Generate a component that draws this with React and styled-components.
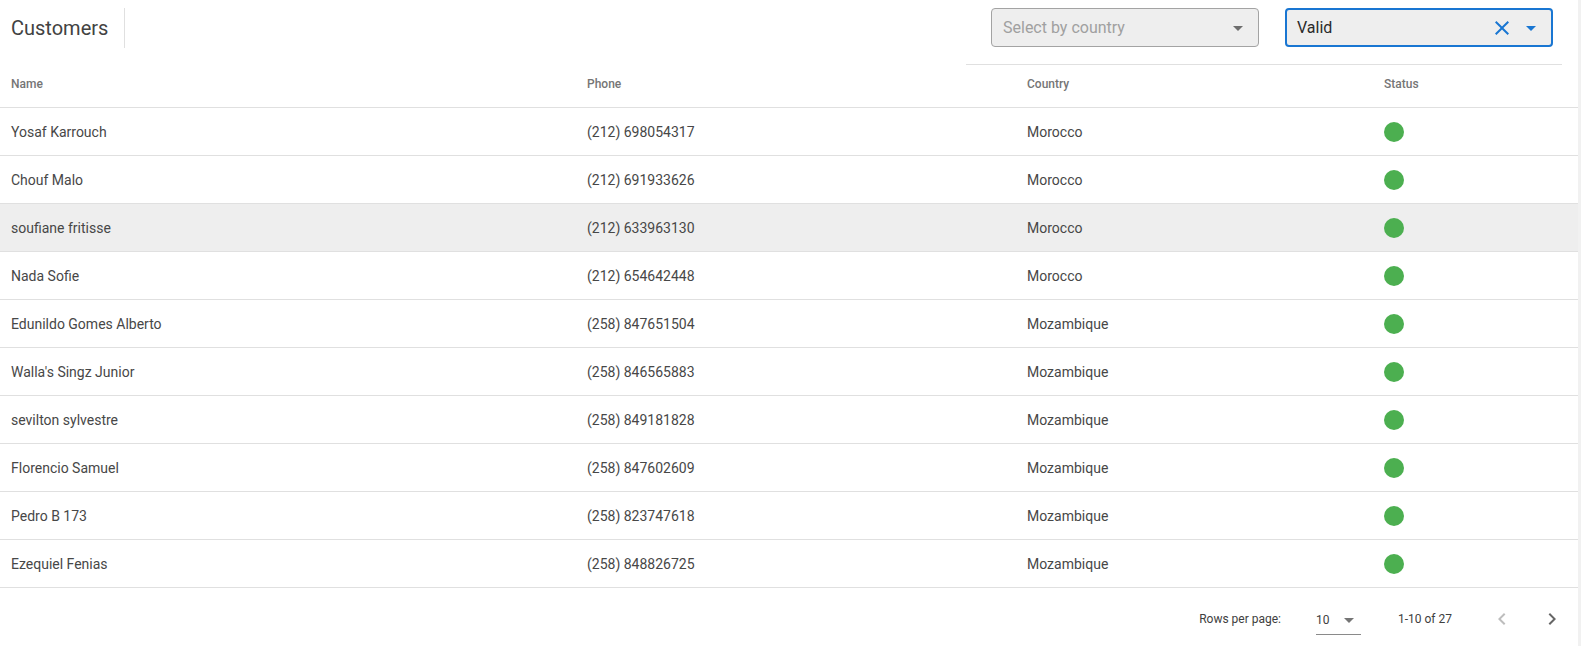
import React from "react";
import styled, { createGlobalStyle } from "styled-components";

const GlobalStyle = createGlobalStyle`
  html, body {
    margin: 0;
    padding: 0;
    background: #f1f1f1;
  }
  body {
    font-family: Roboto, "Liberation Sans", sans-serif;
  }
`;

const customers = [
  { name: "Yosaf Karrouch", phone: "(212) 698054317", country: "Morocco" },
  { name: "Chouf Malo", phone: "(212) 691933626", country: "Morocco" },
  { name: "soufiane fritisse", phone: "(212) 633963130", country: "Morocco", hover: true },
  { name: "Nada Sofie", phone: "(212) 654642448", country: "Morocco" },
  { name: "Edunildo Gomes Alberto", phone: "(258) 847651504", country: "Mozambique" },
  { name: "Walla's Singz Junior", phone: "(258) 846565883", country: "Mozambique" },
  { name: "sevilton sylvestre", phone: "(258) 849181828", country: "Mozambique" },
  { name: "Florencio Samuel", phone: "(258) 847602609", country: "Mozambique" },
  { name: "Pedro B 173", phone: "(258) 823747618", country: "Mozambique" },
  { name: "Ezequiel Fenias", phone: "(258) 848826725", country: "Mozambique" }
];

const Page = styled.div`
  width: 1578px;
  height: 646px;
  background: #fff;
  color: rgba(0, 0, 0, 0.87);
`;

const Toolbar = styled.div`
  display: flex;
  align-items: flex-start;
  height: 65px;
`;

const Title = styled.h6`
  margin: 8px 0 0 0;
  height: 40px;
  padding: 0 16px 0 11px;
  display: flex;
  align-items: center;
  border-right: 1px solid #e0e0e0;
  font-size: 20px;
  font-weight: 400;
  color: #424242;
`;

const Filters = styled.div`
  margin-left: auto;
  margin-right: 16px;
  display: flex;
  gap: 26px;
  padding: 8px 9px 17px 25px;
  border-bottom: 1px solid #e0e0e0;
`;

const SelectBox = styled.div`
  box-sizing: border-box;
  width: ${(p) => p.width}px;
  height: 39px;
  display: flex;
  align-items: center;
  padding: 0 8px 0 11px;
  background: #eeeeee;
  border: ${(p) => (p.focused ? "2px solid #1976d2" : "1px solid #a3a3a3")};
  border-radius: 4px;
  font-size: 16px;
  color: ${(p) => (p.placeholder ? "#a0a0a0" : "#2a2a2a")};
`;

const SelectValue = styled.span`
  flex: 1;
  margin-left: ${(p) => (p.focused ? -1 : 0)}px;
`;

const Icon = styled.svg`
  width: 24px;
  height: 24px;
  flex-shrink: 0;
  fill: ${(p) => p.color || "rgba(0,0,0,0.54)"};
  margin-left: ${(p) => p.gap || 0}px;
`;

const Row = styled.div`
  display: grid;
  grid-template-columns: 576px 440px 357px 1fr;
  align-items: center;
  height: ${(p) => (p.head ? 42 : 47)}px;
  border-bottom: 1px solid #e0e0e0;
  background: ${(p) => (p.hover ? "#eeeeee" : "transparent")};
`;

const HeadCell = styled.div`
  padding: 0 0 5px 11px;
  font-size: 12px;
  font-weight: 500;
  color: #757575;
`;

const Cell = styled.div`
  padding-left: 11px;
  font-size: 14px;
  color: #474747;
`;

const Dot = styled.span`
  display: block;
  width: 20px;
  height: 20px;
  margin-top: 1px;
  border-radius: 50%;
  background: #4caf50;
`;

const Footer = styled.div`
  display: flex;
  align-items: center;
  justify-content: flex-end;
  height: 62px;
  padding-right: 2px;
  font-size: 12px;
  color: #404040;
`;

const RowsLabel = styled.span`
  margin-right: 35px;
`;

const PageSelect = styled.div`
  display: flex;
  align-items: center;
  width: 45px;
  height: 28px;
  border-bottom: 1px solid #8a8a8a;
  margin-top: 2px;
  margin-right: 37px;
  svg {
    margin-left: 8px;
  }
`;

const Range = styled.span`
  margin-right: 24px;
`;

const NavButton = styled.button`
  width: 48px;
  height: 48px;
  border: none;
  background: none;
  padding: 0;
  margin-left: 2px;
  display: flex;
  align-items: center;
  justify-content: center;
`;

const ArrowDrop = ({ color, gap }) => (
  <Icon viewBox="0 0 24 24" color={color} gap={gap}>
    <path d="M7 10l5 5 5-5z" />
  </Icon>
);

export default function App() {
  return (
    <Page>
      <GlobalStyle />
      <Toolbar>
        <Title>Customers</Title>
        <Filters>
          <SelectBox width={268} placeholder>
            <SelectValue>Select by country</SelectValue>
            <ArrowDrop />
          </SelectBox>
          <SelectBox width={268} focused>
            <SelectValue focused>Valid</SelectValue>
            <Icon viewBox="0 0 24 24" color="#1976d2">
              <path d="M19 6.41 17.59 5 12 10.59 6.41 5 5 6.41 10.59 12 5 17.59 6.41 19 12 13.41 17.59 19 19 17.59 13.41 12z" />
            </Icon>
            <ArrowDrop color="#1976d2" gap={5} />
          </SelectBox>
        </Filters>
      </Toolbar>

      <Row head>
        <HeadCell>Name</HeadCell>
        <HeadCell>Phone</HeadCell>
        <HeadCell>Country</HeadCell>
        <HeadCell>Status</HeadCell>
      </Row>
      {customers.map((c) => (
        <Row key={c.phone} hover={c.hover}>
          <Cell>{c.name}</Cell>
          <Cell>{c.phone}</Cell>
          <Cell>{c.country}</Cell>
          <Cell>
            <Dot />
          </Cell>
        </Row>
      ))}

      <Footer>
        <RowsLabel>Rows per page:</RowsLabel>
        <PageSelect>
          <span>10</span>
          <ArrowDrop />
        </PageSelect>
        <Range>1-10 of 27</Range>
        <NavButton aria-label="Previous page">
          <Icon viewBox="0 0 24 24" color="rgba(0,0,0,0.26)">
            <path d="M15.41 7.41 14 6l-6 6 6 6 1.41-1.41L10.83 12z" />
          </Icon>
        </NavButton>
        <NavButton aria-label="Next page">
          <Icon viewBox="0 0 24 24" color="rgba(0,0,0,0.6)">
            <path d="M10 6 8.59 7.41 13.17 12l-4.58 4.59L10 18l6-6z" />
          </Icon>
        </NavButton>
      </Footer>
    </Page>
  );
}
